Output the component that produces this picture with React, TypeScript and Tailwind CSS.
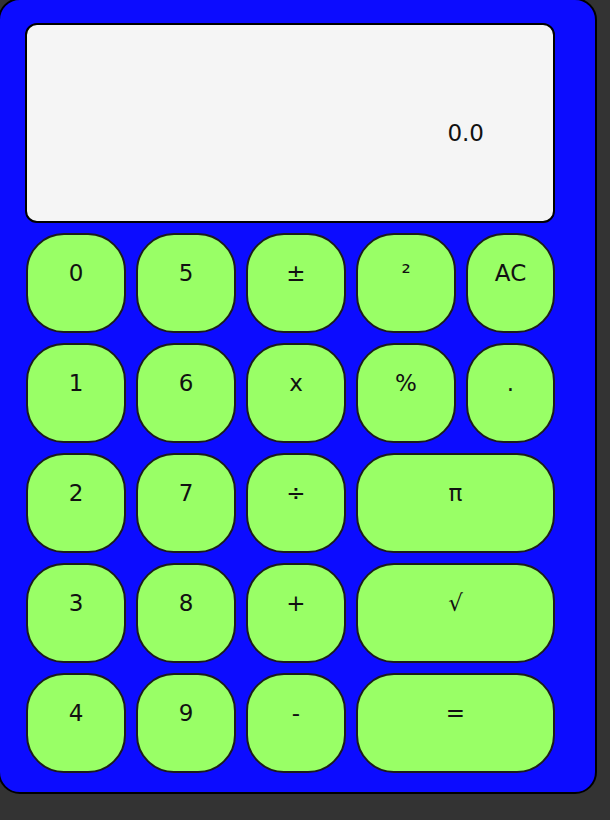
import React from "react";

const font = { fontFamily: '"DejaVu Sans", "Liberation Sans", sans-serif' };

function Key({ label, wide, narrow }: { label: string; wide?: boolean; narrow?: boolean }) {
  const w = wide ? "w-[199px]" : narrow ? "w-[89px]" : "w-[100px]";
  return (
    <div
      className={`${w} h-[100px] shrink-0 rounded-[38px] border-2 border-[#1c1c1c] bg-[#99ff66] flex justify-center items-start pt-[24px] text-[23px] leading-[28px] text-[#111]`}
    >
      {label}
    </div>
  );
}

export default function App() {
  const rows: { label: string; wide?: boolean; narrow?: boolean }[][] = [
    [{ label: "0" }, { label: "5" }, { label: "±" }, { label: "²" }, { label: "AC", narrow: true }],
    [{ label: "1" }, { label: "6" }, { label: "x" }, { label: "%" }, { label: ".", narrow: true }],
    [{ label: "2" }, { label: "7" }, { label: "÷" }, { label: "π", wide: true }],
    [{ label: "3" }, { label: "8" }, { label: "+" }, { label: "√", wide: true }],
    [{ label: "4" }, { label: "9" }, { label: "-" }, { label: "=", wide: true }],
  ];
  return (
    <div className="w-[610px] h-[820px] bg-[#333333] overflow-hidden" style={font}>
      <div className="ml-[-2px] mt-[-2px] w-[599px] h-[796px] rounded-[22px] border-2 border-black bg-[#0c0cff] pl-[25px] pt-[23px]">
        <div className="w-[530px] h-[200px] rounded-[12px] border-2 border-black bg-[#f5f5f5] flex items-center justify-end pr-[69px] pt-[20px] text-[23px] text-[#111]">
          0.0
        </div>
        <div className="mt-[10px] ml-[1px] flex flex-col gap-[10px]">
          {rows.map((r, i) => (
            <div key={i} className="flex gap-[10px]">
              {r.map((k, j) => (
                <Key key={j} {...k} />
              ))}
            </div>
          ))}
        </div>
      </div>
    </div>
  );
}
